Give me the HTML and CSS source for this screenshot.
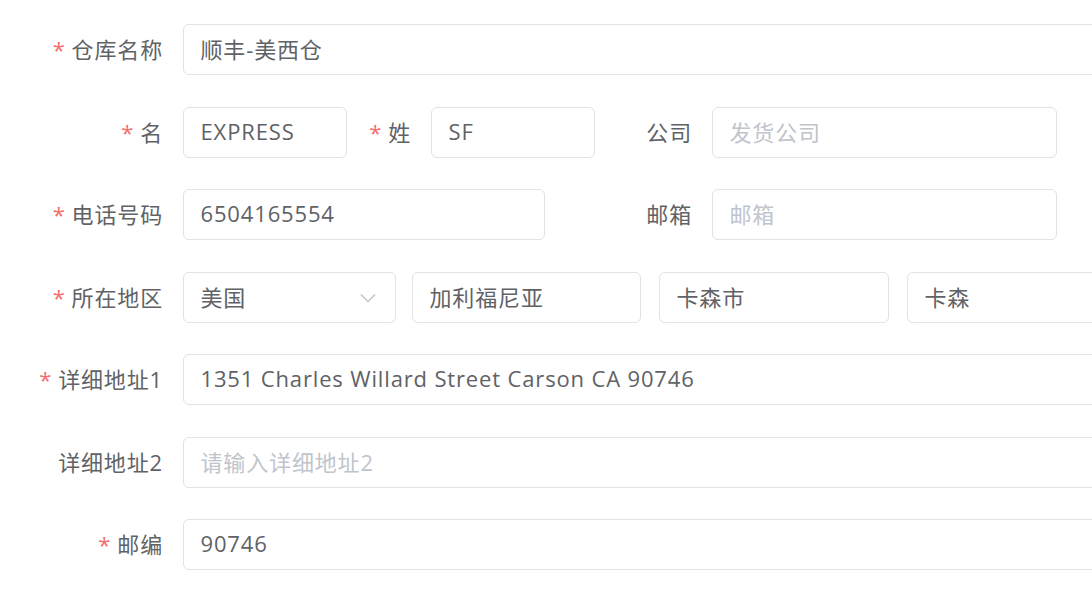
FILE: index.html
```html
<!DOCTYPE html>
<html lang="zh-CN">
<head>
<meta charset="utf-8">
<title>仓库表单</title>
<link rel="stylesheet" href="styles.css">
</head>
<body>
<form class="form">
  <div class="row">
    <label class="label req">仓库名称</label>
    <div class="field wide"><span class="val">顺丰-美西仓</span></div>
  </div>
  <div class="row">
    <label class="label req">名</label>
    <div class="field w-name"><span class="val">EXPRESS</span></div>
    <label class="label req lab-last">姓</label>
    <div class="field w-name"><span class="val">SF</span></div>
    <label class="label lab-company">公司</label>
    <div class="field w-company"><span class="ph">发货公司</span></div>
  </div>
  <div class="row">
    <label class="label req">电话号码</label>
    <div class="field w-phone"><span class="val">6504165554</span></div>
    <label class="label lab-mail">邮箱</label>
    <div class="field w-company"><span class="ph">邮箱</span></div>
  </div>
  <div class="row">
    <label class="label req">所在地区</label>
    <div class="field w-country select"><span class="val">美国</span>
      <svg class="chev" width="16" height="10" viewBox="0 0 16 10"><path d="M1 1.5 L8 8.5 L15 1.5" fill="none" stroke="#c0c4cc" stroke-width="1.4"/></svg>
    </div>
    <div class="field w-state"><span class="val">加利福尼亚</span></div>
    <div class="field w-city"><span class="val">卡森市</span></div>
    <div class="field w-town"><span class="val">卡森</span></div>
  </div>
  <div class="row">
    <label class="label req">详细地址1</label>
    <div class="field wide"><span class="val">1351 Charles Willard Street Carson CA 90746</span></div>
  </div>
  <div class="row">
    <label class="label">详细地址2</label>
    <div class="field wide"><span class="ph">请输入详细地址2</span></div>
  </div>
  <div class="row">
    <label class="label req">邮编</label>
    <div class="field wide"><span class="val">90746</span></div>
  </div>
</form>
</body>
</html>
```
FILE: styles.css
```css
html, body {
  margin: 0;
  padding: 0;
  background: #ffffff;
  overflow: hidden;
}
.form {
  width: 1300px;
  padding-top: 24px;
  font-family: "Open Sans", "Noto Sans CJK SC", sans-serif;
  font-size: 22px;
  letter-spacing: 0.85px;
  color: #606266;
}
.row {
  display: flex;
  align-items: center;
  height: 51px;
  margin-bottom: 31.5px;
}
.label {
  flex: none;
  box-sizing: border-box;
  width: 183px;
  padding-right: 20px;
  padding-bottom: 3px;
  text-align: right;
  color: #606266;
  white-space: nowrap;
}
.req::before {
  content: "*";
  color: #f56c6c;
  margin-right: 6px;
}
.lab-last { width: 84px; }
.lab-company { width: 117px; }
.lab-mail { width: 167px; }
.field {
  flex: none;
  box-sizing: border-box;
  height: 51px;
  border: 1.5px solid #dfe2e8;
  border-radius: 6px;
  padding-left: 16.5px;
  padding-bottom: 3px;
  display: flex;
  align-items: center;
  white-space: nowrap;
  position: relative;
}
.val { color: #606266; }
.ph { color: #c0c4cc; }
.wide { width: 1100px; }
.w-name { width: 164px; }
.w-company { width: 345px; }
.w-phone { width: 362px; }
.w-country { width: 213px; }
.w-state { width: 229px; margin-left: 16px; }
.w-city { width: 230px; margin-left: 18px; }
.w-town { width: 230px; margin-left: 18px; }
.chev {
  position: absolute;
  right: 19px;
  top: 20px;
}
```
